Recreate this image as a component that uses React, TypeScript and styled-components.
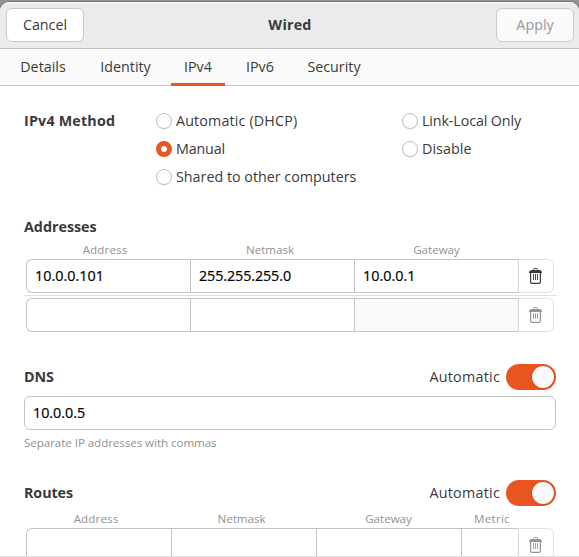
import React from 'react';
import styled, { createGlobalStyle } from 'styled-components';

const Global = createGlobalStyle`
  * { box-sizing: border-box; }
  body { margin: 0; overflow: hidden; background: #939393; }
`;

const Window = styled.main`
  width: 579px;
  height: 555px;
  margin-top: 2px;
  display: flex;
  flex-direction: column;
  overflow: hidden;
  border-radius: 9px 9px 0 0;
  background: #fff;
  box-shadow: 0 0 0 1px #757575;
  border-bottom: 1px solid #dcdcdc;
  color: #3a3a3a;
  font: 14.3px/20px 'Open Sans', sans-serif;
`;

const HeaderBar = styled.header`
  flex: none;
  height: 47px;
  padding: 6px 5px 6px 6px;
  display: flex;
  justify-content: space-between;
  align-items: flex-start;
  background: #ebebeb;
  border-bottom: 1px solid #bfbfbf;
  box-shadow: inset 0 1px #f8f8f8;
`;

const Title = styled.h1`
  margin: 7px 0 0;
  font-size: 14.3px;
  line-height: 20px;
  letter-spacing: 0.22px;
`;

const Button = styled.button`
  width: 78px;
  height: 34px;
  padding: 0 0 1px;
  border: 1px solid #c9c9c9;
  border-radius: 6px;
  background: #fff;
  color: #3a3a3a;
  font: inherit;
  &:disabled { background: #fafafa; color: #999; }
`;

const TabBar = styled.nav`
  flex: none;
  height: 37px;
  padding-left: 6px;
  display: flex;
  background: #fafafa;
  border-bottom: 1px solid #c4c4c4;
`;

const Tab = styled.a<{ $width: number; $active?: boolean }>`
  width: ${p => p.$width}px;
  height: 37px;
  padding-top: 8px;
  text-align: center;
  border-bottom: ${p => (p.$active ? '3px solid #e95420' : '0')};
`;

const Content = styled.div`
  padding: 25px 23px 0 24px;
`;

const Methods = styled.section`
  height: 84px;
  display: grid;
  grid-template-columns: 132px 246px 1fr;
  grid-auto-rows: 28px;
`;

const Heading = styled.h2<{ $spacing?: number }>`
  margin: 0;
  font-size: 14.3px;
  line-height: 20px;
  letter-spacing: ${p => p.$spacing ?? 0}px;
`;

const Option = styled.div<{ $column: number; $spacing?: number }>`
  grid-column: ${p => p.$column};
  display: flex;
  gap: 4px;
  white-space: nowrap;
  letter-spacing: ${p => p.$spacing ?? 0}px;
`;

const Radio = styled.span<{ $checked?: boolean }>`
  flex: none;
  width: 16px;
  height: 16px;
  margin-top: 2px;
  border-radius: 50%;
  border: ${p => (p.$checked ? '5.5px solid #e95420' : '1px solid #bfbfbf')};
  background: #fff;
  box-shadow: 0 1px 1px ${p => (p.$checked ? 'transparent' : '#00000010')};
`;

const AddressSection = styled.section`
  margin-top: 22px;
  height: 147px;
`;

const ColumnTitles = styled.div<{ $columns: string }>`
  display: grid;
  grid-template-columns: ${p => p.$columns};
  margin: 5px 0 1px;
  text-align: center;
  color: #929292;
  font-size: 11.6px;
  line-height: 16px;
`;

const ColumnTitle = styled.span<{ $spacing?: number }>`
  letter-spacing: ${p => p.$spacing ?? 0}px;
`;

const EntryRow = styled.div<{ $columns: string }>`
  display: grid;
  grid-template-columns: ${p => p.$columns};
  height: 34px;
  margin: 0 2px;
`;

const Cell = styled.div<{ $disabled?: boolean; $spacing?: number }>`
  height: 34px;
  padding: 6px 8px;
  border: 1px solid #c4c4c4;
  border-right: 0;
  background: ${p => (p.$disabled ? '#fafafa' : '#fff')};
  color: #000;
  letter-spacing: ${p => p.$spacing ?? 0}px;
  -webkit-text-stroke: 0.2px;
  &:first-child { border-radius: 6px 0 0 6px; }
`;

const DeleteButton = styled.button<{ $muted?: boolean }>`
  height: 34px;
  padding: 0 1px 0 0;
  display: flex;
  align-items: center;
  justify-content: center;
  border: 1px solid #e0e0e0;
  border-left-color: #d4d4d4;
  border-radius: 0 6px 6px 0;
  background: #fff;
  color: ${p => (p.$muted ? '#959595' : '#3a3a3a')};
`;

const Divider = styled.div`
  height: 1px;
  margin: 2px 0;
  background: #e0e0e0;
`;

const SectionHeader = styled.div`
  height: 26px;
  display: flex;
  align-items: center;
  justify-content: space-between;
`;

const SwitchLabel = styled.label`
  display: flex;
  align-items: center;
  gap: 6px;
  letter-spacing: 0.26px;
`;

const Switch = styled.span`
  width: 50px;
  height: 26px;
  padding: 2px;
  display: flex;
  justify-content: flex-end;
  border-radius: 13px;
  background: #e95420;
`;

const Knob = styled.span`
  width: 22px;
  height: 22px;
  border-radius: 50%;
  background: #fafafa;
  box-shadow: 0 0 1px 0.5px #c84516;
`;

const DnsSection = styled.section`
  height: 116px;
`;

const DnsEntry = styled.div`
  height: 34px;
  margin-top: 6px;
  padding: 6px 8px;
  border: 1px solid #c4c4c4;
  border-radius: 6px;
  color: #000;
  -webkit-text-stroke: 0.2px;
`;

const Hint = styled.p`
  margin: 5px 0 0;
  color: #929292;
  font-size: 11.6px;
  line-height: 16px;
  letter-spacing: -0.06px;
`;

const addressColumns = '164px 164px 164px 36px';
const addressTitles = '162px 168px 165px';
const routeColumns = '145px 145px 145px 57px 36px';
const routeTitles = '144px 147px 147px 60px';

const Trash = () => (
  <svg width="13" height="16" viewBox="0 0 13 16" fill="none" stroke="currentColor">
    <path d="M4.5 2.5v-1q0-1 1-1h2q1 0 1 1v1" />
    <path d="M0 5V4Q.5 3 2 2h9q1.500 1 2 2v1z" fill="currentColor" stroke="none" />
    <path d="M1.600 4.500v9.500q0 1.400 1.400 1.400h7q1.400 0 1.400-1.400v-9.500" strokeWidth="1.2" />
    <path d="M4.5 6v6M6.5 6v6M8.5 6v6" strokeWidth="0.9" />
  </svg>
);

const AutomaticSwitch = () => (
  <SwitchLabel>Automatic<Switch role="switch" aria-checked><Knob /></Switch></SwitchLabel>
);

export default function App() {
  return (
    <>
      <Global />
      <Window>
        <HeaderBar>
          <Button>Cancel</Button>
          <Title>Wired</Title>
          <Button disabled>Apply</Button>
        </HeaderBar>
        <TabBar>
          <Tab $width={74}>Details</Tab>
          <Tab $width={91}>Identity</Tab>
          <Tab $width={54} $active>IPv4</Tab>
          <Tab $width={70}>IPv6</Tab>
          <Tab $width={78}>Security</Tab>
        </TabBar>
        <Content>
          <Methods>
            <Heading $spacing={0.18}>IPv4 Method</Heading>
            <Option $column={2} $spacing={0.15}><Radio />Automatic (DHCP)</Option>
            <Option $column={3} $spacing={-0.12}><Radio />Link-Local Only</Option>
            <Option $column={2} $spacing={-0.16}><Radio $checked />Manual</Option>
            <Option $column={3} $spacing={0.07}><Radio />Disable</Option>
            <Option $column={2}><Radio />Shared to other computers</Option>
          </Methods>
          <AddressSection>
            <Heading>Addresses</Heading>
            <ColumnTitles $columns={addressTitles}>
              <ColumnTitle $spacing={0.12}>Address</ColumnTitle>
              <ColumnTitle>Netmask</ColumnTitle>
              <ColumnTitle>Gateway</ColumnTitle>
            </ColumnTitles>
            <EntryRow $columns={addressColumns}>
              <Cell $spacing={0.05}>10.0.0.101</Cell>
              <Cell $spacing={-0.08}>255.255.255.0</Cell>
              <Cell $spacing={0.05}>10.0.0.1</Cell>
              <DeleteButton aria-label="Delete address"><Trash /></DeleteButton>
            </EntryRow>
            <Divider />
            <EntryRow $columns={addressColumns}>
              <Cell /><Cell /><Cell $disabled />
              <DeleteButton $muted aria-label="Delete address"><Trash /></DeleteButton>
            </EntryRow>
          </AddressSection>
          <DnsSection>
            <SectionHeader>
              <Heading $spacing={-0.1}>DNS</Heading>
              <AutomaticSwitch />
            </SectionHeader>
            <DnsEntry>10.0.0.5</DnsEntry>
            <Hint>Separate IP addresses with commas</Hint>
          </DnsSection>
          <section>
            <SectionHeader>
              <Heading $spacing={-0.07}>Routes</Heading>
              <AutomaticSwitch />
            </SectionHeader>
            <ColumnTitles $columns={routeTitles}>
              <ColumnTitle $spacing={0.12}>Address</ColumnTitle>
              <ColumnTitle>Netmask</ColumnTitle>
              <ColumnTitle>Gateway</ColumnTitle>
              <ColumnTitle $spacing={0.25}>Metric</ColumnTitle>
            </ColumnTitles>
            <EntryRow $columns={routeColumns}>
              <Cell /><Cell /><Cell /><Cell />
              <DeleteButton $muted aria-label="Delete route"><Trash /></DeleteButton>
            </EntryRow>
          </section>
        </Content>
      </Window>
    </>
  );
}
